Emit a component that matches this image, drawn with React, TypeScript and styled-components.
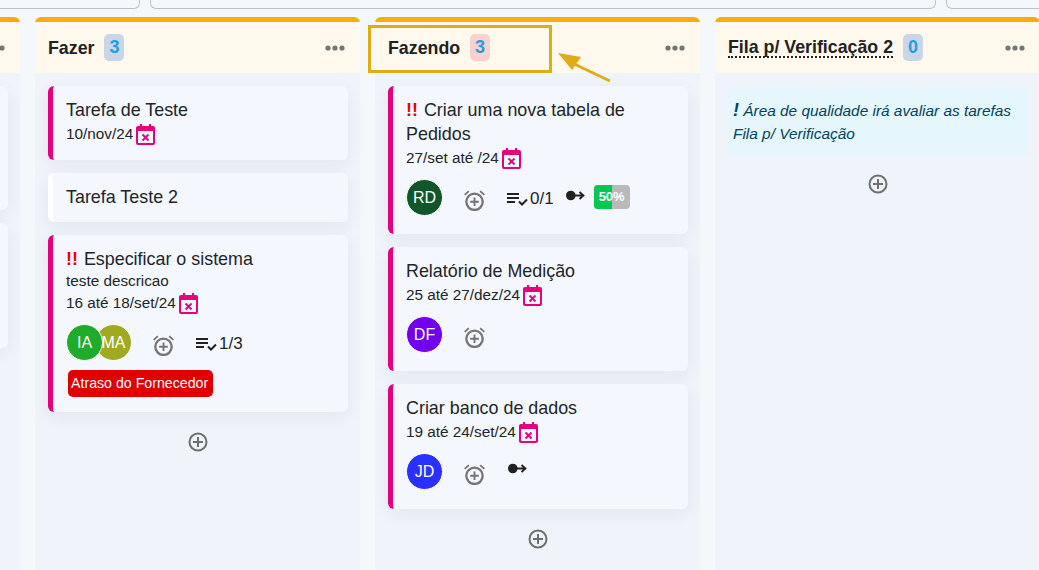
import React from "react";
import styled, { createGlobalStyle } from "styled-components";

const Global = createGlobalStyle`
  html, body { margin: 0; padding: 0; background: #f4f7fc; }
  body { font-family: "Liberation Sans", Arial, sans-serif; color: #212529; }
`;

const Page = styled.div`
  position: relative;
  width: 1039px;
  height: 570px;
  overflow: hidden;
  background: #f4f7fc;
`;

const TopBar = styled.div`
  display: flex;
  gap: 10px;
  height: 9px;
  margin-left: -160px;
`;

const TopBox = styled.div<{ $w: number }>`
  flex: none;
  width: ${(p) => p.$w}px;
  height: 8px;
  box-sizing: content-box;
  border: 1px solid #bcc1c6;
  border-top: none;
  border-radius: 0 0 6px 6px;
`;

const Board = styled.div`
  display: flex;
  gap: 15px;
  margin: 8px 0 0 -305px;
  height: 553px;
`;

const Column = styled.section`
  flex: none;
  width: 325px;
  display: flex;
  flex-direction: column;
  background: #eff3fa;
  border-top: 5px solid #fbac06;
  border-radius: 6px 6px 0 0;
`;

const ColumnHead = styled.header`
  flex: none;
  display: flex;
  align-items: center;
  height: 51px;
  padding: 0 15px 0 13px;
  background: #fff8ec;
`;

const ColumnTitle = styled.h2<{ $dotted?: boolean }>`
  margin: 0;
  font-size: 17.8px;
  font-weight: 700;
  line-height: 20px;
  color: #212121;
  border-bottom: ${(p) => (p.$dotted ? "2px dotted #212121" : "none")};
  height: ${(p) => (p.$dotted ? "19px" : "20px")};
`;

const Count = styled.span<{ $bg: string }>`
  width: 20px;
  height: 27px;
  margin-left: 10px;
  border-radius: 5px;
  background: ${(p) => p.$bg};
  color: #1ba1e2;
  font-size: 18px;
  font-weight: 700;
  line-height: 27px;
  text-align: center;
`;

const MoreDots = styled.svg`
  margin-left: auto;
  width: 20px;
  height: 6px;
  fill: #757575;
`;

const ColumnBody = styled.div`
  display: flex;
  flex-direction: column;
  gap: 13px;
  padding: 13px 12px 0 13px;
`;

const Card = styled.article<{ $accent: boolean; $h: number }>`
  box-sizing: border-box;
  min-height: ${(p) => p.$h}px;
  padding: 12px 13px 0 13px;
  background: #f4f7fd;
  border-left: 5px solid ${(p) => (p.$accent ? "#e6007e" : "#ffffff")};
  border-radius: 6px;
  box-shadow: 0 5px 18px rgba(30, 50, 90, 0.06);
`;

const CardTitle = styled.div`
  font-size: 17.9px;
  line-height: 24px;
  color: #212529;
`;

const Bang = styled.span`
  color: #f00000;
  font-weight: 700;
  margin-right: 1px;
`;

const Description = styled.div`
  font-size: 15.3px;
  line-height: 20px;
`;

const DateRow = styled.div`
  display: flex;
  align-items: center;
  font-size: 15.3px;
  line-height: 24px;
  height: 24px;
  color: #212529;
`;

const DateIcon = styled.svg`
  flex: none;
  width: 19px;
  height: 21px;
  margin: 0 0 0 3px;
`;

const MetaRow = styled.div`
  display: flex;
  align-items: center;
  height: 40px;
  margin-top: 7px;
`;

const Avatars = styled.div`
  display: flex;
`;

const Avatar = styled.div<{ $bg: string; $overlap?: boolean; $front?: boolean }>`
  flex: none;
  box-sizing: content-box;
  width: 35px;
  height: 35px;
  margin-left: ${(p) => (p.$overlap ? "-8px" : "0")};
  position: relative;
  z-index: ${(p) => (p.$front ? 1 : 0)};
  border: 1px solid #ffffff;
  border-radius: 50%;
  background: ${(p) => p.$bg};
  color: #ffffff;
  font-size: 16px;
  line-height: 35px;
  text-align: center;
`;

const AlarmIcon = styled.svg`
  flex: none;
  width: 21px;
  height: 21px;
  margin: 6px 0 0 21px;
  stroke: #757575;
  fill: none;
`;

const CheckList = styled.div`
  display: flex;
  align-items: center;
  margin: 4px 0 0 22px;
  font-size: 17px;
  line-height: 20px;
`;

const ListIcon = styled.svg`
  width: 21px;
  height: 13px;
  margin-right: 2px;
`;

const FlowIcon = styled.svg<{ $alone?: boolean }>`
  flex: none;
  width: 19px;
  height: 11px;
  margin: ${(p) => (p.$alone ? "-6px 0 0 23px" : "-3px 0 0 12px")};
`;

const Progress = styled.div`
  position: relative;
  width: 36px;
  height: 24px;
  margin: -1px 0 0 9px;
  border-radius: 4px;
  overflow: hidden;
  background: #b9b9b9;
  color: #ffffff;
  font-size: 13px;
  font-weight: 700;
  line-height: 24px;
  text-align: center;
`;

const ProgressFill = styled.div`
  position: absolute;
  inset: 0 auto 0 0;
  background: #00c853;
`;

const ProgressLabel = styled.span`
  position: relative;
`;

const Tag = styled.div`
  display: inline-block;
  margin: 8px 0 0 2px;
  padding: 0 5px 0 3px;
  height: 27px;
  background: #e00000;
  border-radius: 5px;
  color: #ffffff;
  font-size: 14.2px;
  line-height: 27px;
`;

const AddButton = styled.svg`
  flex: none;
  align-self: center;
  width: 20px;
  height: 20px;
  margin-top: 7px;
  stroke: #6f6f6f;
  fill: none;
`;

const Note = styled.div`
  box-sizing: border-box;
  height: 70px;
  margin-bottom: -2px;
  padding: 13px 5px;
  background: #e5f6fd;
  border-radius: 6px;
  color: #014361;
  font-size: 15.4px;
  font-style: italic;
  line-height: 23px;
`;

const NoteMark = styled.b`
  font-size: 18px;
`;

const Callout = styled.div`
  position: absolute;
  left: 368px;
  top: 25px;
  box-sizing: border-box;
  width: 184px;
  height: 48px;
  border: 3px solid #dfac16;
`;

const Arrow = styled.svg`
  position: absolute;
  left: 555px;
  top: 50px;
  width: 60px;
  height: 36px;
`;

const Dots = () => (
  <MoreDots viewBox="0 0 20 6">
    <circle cx="3" cy="3" r="2.6" />
    <circle cx="10" cy="3" r="2.6" />
    <circle cx="17" cy="3" r="2.6" />
  </MoreDots>
);

const CalendarX = () => (
  <DateIcon viewBox="0 0 19 21">
    <path fill="#e6007e" d="M4 0h2v2h7V0h2v2h2a2 2 0 0 1 2 2v15a2 2 0 0 1-2 2H2a2 2 0 0 1-2-2V4a2 2 0 0 1 2-2h2z" />
    <rect x="2" y="7" width="15" height="12" fill="#f4f7fd" />
    <path stroke="#e6007e" strokeWidth="1.8" d="M6.5 10.5l6 6M12.5 10.5l-6 6" />
  </DateIcon>
);

const Alarm = () => (
  <AlarmIcon viewBox="0 0 21 21" strokeWidth="2.3">
    <circle cx="10.5" cy="11.8" r="8.2" />
    <path strokeWidth="1.9" d="M10.5 7.5v8.6M6.2 11.8h8.6" />
    <path strokeWidth="1.8" d="M0.7 4.8L4.8 1.1M20.3 4.8L16.2 1.1" />
  </AlarmIcon>
);

const ListCheck = () => (
  <ListIcon viewBox="0 0 21 13">
    <path stroke="#212121" strokeWidth="2" fill="none" d="M0 1h12M0 5h12M0 9h8" />
    <path stroke="#212121" strokeWidth="2" fill="none" d="M12 8.5l3 3 5-5" />
  </ListIcon>
);

const Flow = ({ alone }: { alone?: boolean }) => (
  <FlowIcon $alone={alone} viewBox="0 0 19 11">
    <circle cx="4.8" cy="5.5" r="4.8" fill="#212121" />
    <path stroke="#212121" strokeWidth="1.8" fill="none" d="M8 5.5h9.5M13.5 2L17.5 5.5L13.5 9" />
  </FlowIcon>
);

const Add = () => (
  <AddButton viewBox="0 0 20 20" strokeWidth="2">
    <circle cx="10" cy="10" r="8.5" />
    <path d="M10 5v10M5 10h10" />
  </AddButton>
);

export default function App() {
  return (
    <Page>
      <Global />
      <TopBar>
        <TopBox $w={298} />
        <TopBox $w={784} />
        <TopBox $w={200} />
      </TopBar>
      <Board>
        <Column>
          <ColumnHead>
            <Dots />
          </ColumnHead>
          <ColumnBody>
            <Card $accent $h={124} />
            <Card $accent $h={125} />
          </ColumnBody>
        </Column>

        <Column>
          <ColumnHead>
            <ColumnTitle>Fazer</ColumnTitle>
            <Count $bg="#c8d6e8">3</Count>
            <Dots />
          </ColumnHead>
          <ColumnBody>
            <Card $accent $h={74}>
              <CardTitle>Tarefa de Teste</CardTitle>
              <DateRow>10/nov/24<CalendarX /></DateRow>
            </Card>
            <Card $accent={false} $h={49}>
              <CardTitle>Tarefa Teste 2</CardTitle>
            </Card>
            <Card $accent $h={177}>
              <CardTitle><Bang>!!</Bang> Especificar o sistema</CardTitle>
              <Description>teste descricao</Description>
              <DateRow>16 até 18/set/24<CalendarX /></DateRow>
              <MetaRow>
                <Avatars>
                  <Avatar $bg="#21ab2b" $front>IA</Avatar>
                  <Avatar $bg="#a0aa20" $overlap>MA</Avatar>
                </Avatars>
                <Alarm />
                <CheckList><ListCheck />1/3</CheckList>
              </MetaRow>
              <Tag>Atraso do Fornecedor</Tag>
            </Card>
            <Add />
          </ColumnBody>
        </Column>

        <Column>
          <ColumnHead>
            <ColumnTitle>Fazendo</ColumnTitle>
            <Count $bg="#fbd0d0">3</Count>
            <Dots />
          </ColumnHead>
          <ColumnBody>
            <Card $accent $h={148}>
              <CardTitle><Bang>!!</Bang> Criar uma nova tabela de Pedidos</CardTitle>
              <DateRow>27/set até /24<CalendarX /></DateRow>
              <MetaRow>
                <Avatars><Avatar $bg="#10562a">RD</Avatar></Avatars>
                <Alarm />
                <CheckList><ListCheck />0/1</CheckList>
                <Flow />
                <Progress>
                  <ProgressFill style={{ width: "50%" }} />
                  <ProgressLabel>50%</ProgressLabel>
                </Progress>
              </MetaRow>
            </Card>
            <Card $accent $h={124}>
              <CardTitle>Relatório de Medição</CardTitle>
              <DateRow>25 até 27/dez/24<CalendarX /></DateRow>
              <MetaRow>
                <Avatars><Avatar $bg="#7200ee">DF</Avatar></Avatars>
                <Alarm />
              </MetaRow>
            </Card>
            <Card $accent $h={125}>
              <CardTitle>Criar banco de dados</CardTitle>
              <DateRow>19 até 24/set/24<CalendarX /></DateRow>
              <MetaRow>
                <Avatars><Avatar $bg="#2a30ff">JD</Avatar></Avatars>
                <Alarm />
                <Flow alone />
              </MetaRow>
            </Card>
            <Add />
          </ColumnBody>
        </Column>

        <Column>
          <ColumnHead>
            <ColumnTitle $dotted>Fila p/ Verificação 2</ColumnTitle>
            <Count $bg="#c8d6e8">0</Count>
            <Dots />
          </ColumnHead>
          <ColumnBody>
            <Note>
              <NoteMark>!</NoteMark> Área de qualidade irá avaliar as tarefas Fila p/ Verificação
            </Note>
            <Add />
          </ColumnBody>
        </Column>
      </Board>
      <Callout />
      <Arrow viewBox="0 0 60 36">
        <path stroke="#dfac16" strokeWidth="3" fill="none" d="M55 31L15 12" />
        <path fill="#dfac16" d="M3 3L26 7L17 20z" />
      </Arrow>
    </Page>
  );
}
